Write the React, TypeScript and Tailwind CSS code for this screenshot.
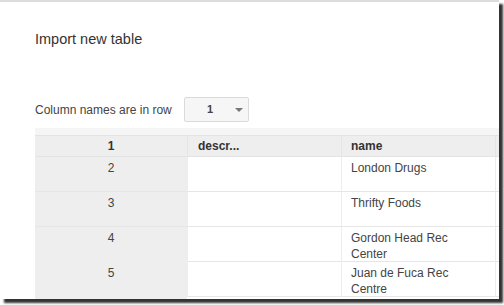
const rows = [
  { n: "2", name: "London Drugs" },
  { n: "3", name: "Thrifty Foods" },
  { n: "4", name: "Gordon Head Rec Center" },
  { n: "5", name: "Juan de Fuca Rec Centre" },
];

export default function App() {
  return (
    <div className="w-[504px] h-[305px] bg-white font-['Liberation_Sans',Arial,sans-serif] text-[#444]">
      <div className="w-[499px] h-[299px] bg-white border-t-2 border-[#dcdcdc] overflow-hidden shadow-[4px_4px_2px_rgba(0,0,0,0.8)]">
        <div className="pl-[35px] pt-[27px]">
          <h1 className="text-[14.5px] leading-[20px] text-[#333]">Import new table</h1>

          <div className="flex items-center mt-[48px] h-[25px]">
            <span className="text-[12px] text-[#444] w-[149px]">Column names are in row</span>
            <div className="flex items-center w-[65px] h-[25px] border border-[#dadada] rounded-[2px] bg-[#f6f6f6]">
              <span className="text-[11px] font-bold text-[#444] w-[50px] text-center">1</span>
              <svg width="8" height="4" viewBox="0 0 8 4">
                <path d="M0 0 L8 0 L4 4 Z" fill="#777" />
              </svg>
            </div>
          </div>

          <div className="mt-[6px] w-[600px] text-[12px]">
            <div className="h-[8px] bg-[#f5f5f5] border-b border-[#e3e3e3]" />
            <div className="grid grid-cols-[152px_154px_154px_140px] h-[21px] bg-[#eeeeee] border-b border-[#e3e3e3] font-bold text-[#333]">
              <div className="text-center leading-[20px]">1</div>
              <div className="pl-[10px] leading-[20px] border-l border-[#e6e6e6]">descr...</div>
              <div className="pl-[9px] leading-[20px] border-l border-[#e6e6e6]">name</div>
              <div className="border-l border-[#e6e6e6]" />
            </div>
            {rows.map((r) => (
              <div key={r.n} className="grid grid-cols-[152px_154px_154px_140px] h-[35px] border-b border-[#e6e6e6]">
                <div className="bg-[#eeeeee] text-center leading-[16px] pt-[3px]">{r.n}</div>
                <div className="border-l border-[#ededed]" />
                <div className="pl-[9px] pt-[3px] leading-[16px] border-l border-[#ededed]">
                  <div className="w-[100px]">{r.name}</div>
                </div>
                <div className="border-l border-[#ededed]" />
              </div>
            ))}
            <div className="grid grid-cols-[152px_1fr] h-[10px]">
              <div className="bg-[#eeeeee]" />
              <div />
            </div>
          </div>
        </div>
      </div>
    </div>
  );
}
